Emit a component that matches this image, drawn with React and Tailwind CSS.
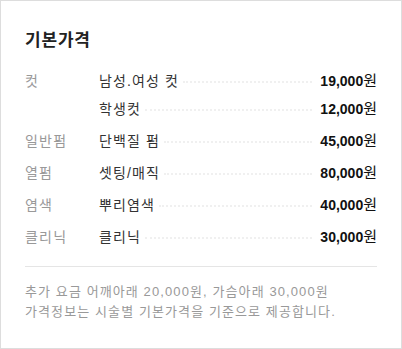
const groups = [
  { category: '컷', items: [{ name: '남성.여성 컷', price: '19,000' }, { name: '학생컷', price: '12,000' }] },
  { category: '일반펌', items: [{ name: '단백질 펌', price: '45,000' }] },
  { category: '열펌', items: [{ name: '셋팅/매직', price: '80,000' }] },
  { category: '염색', items: [{ name: '뿌리염색', price: '40,000' }] },
  { category: '클리닉', items: [{ name: '클리닉', price: '30,000' }] },
];

const font = { fontFamily: '"Liberation Sans", "Noto Sans CJK KR", sans-serif' };

const PriceRow = ({ category, name, price }) => (
  <div className="flex items-center h-[28px]">
    <div className="w-[74px] shrink-0 text-[14px] tracking-[1.2px] text-[#999]">{category}</div>
    <div className="text-[14px] tracking-[1.1px] text-[#333] whitespace-nowrap">{name}</div>
    <div className="flex-1 ml-[4px] mr-[8px] border-b-2 border-dotted border-[#f0f0f0] translate-y-[1px]"></div>
    <div className="text-[14px] text-[#111] whitespace-nowrap">
      <span className="font-bold">{price}</span>
      <span className="text-[15px]">원</span>
    </div>
  </div>
);

export default function App() {
  return (
    <div style={font} className="w-[402px] h-[349px] border border-[#ddd] bg-white px-[24px] pt-[28px]">
      <h2 className="text-[17px] leading-[24px] font-bold tracking-[0.8px] text-[#222]">기본가격</h2>

      <div className="mt-[14px] flex flex-col gap-[4px]">
        {groups.map((group) => (
          <div key={group.category}>
            {group.items.map((item, i) => (
              <PriceRow
                key={item.name}
                category={i === 0 ? group.category : ''}
                name={item.name}
                price={item.price}
              />
            ))}
          </div>
        ))}
      </div>

      {/* Notes */}
      <div className="mt-[15px] border-t border-[#e5e5e5] pt-[15px] text-[13px] leading-[20px] tracking-[1.1px] text-[#999]">
        <p>추가 요금 어깨아래 20,000원, 가슴아래 30,000원</p>
        <p>가격정보는 시술별 기본가격을 기준으로 제공합니다.</p>
      </div>
    </div>
  );
}
